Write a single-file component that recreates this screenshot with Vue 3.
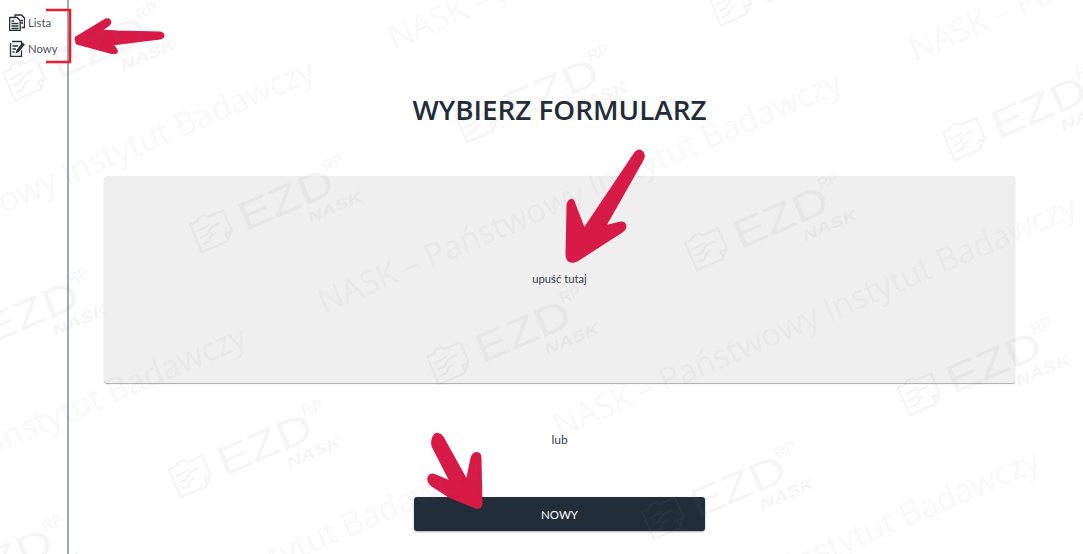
<template>
  <div class="page">
    <aside class="sidebar">
      <a class="side-link">
        <svg class="side-icon" viewBox="0 0 16 17" fill="none" stroke="#27313a" stroke-width="1.3">
          <path d="M6 3V1h6.500l3 3v9.500h-3" />
          <path d="M.7 3.500h7.500l3 3v9.800H.7z" fill="#fff" />
          <path d="M2.500 7h2.500M2.500 9.500h7M2.500 12h7M2.500 14.500h7" />
          <path d="M12 6.500h2M12 9h2" />
        </svg>
        <span>Lista</span>
      </a>
      <a class="side-link">
        <svg class="side-icon" viewBox="0 0 16 17" fill="none" stroke="#27313a" stroke-width="1.3">
          <path d="M3 1.500h9.500v3M12.500 10.500v5.800H1.500V3" />
          <path d="M3.500 6h5.500M3.500 9h3.500M3.500 12h2" />
          <path d="M6.500 13.500l1-3.500 6-7.500 2.400 2-6 7.500z" fill="#27313a" stroke="none" />
        </svg>
        <span>Nowy</span>
      </a>
    </aside>

    <main class="content">
      <h1 class="title">WYBIERZ FORMULARZ</h1>
      <div class="dropzone">upuść tutaj</div>
      <p class="or">lub</p>
      <button class="new-btn">NOWY</button>
    </main>

    <!-- red markup drawn on the screenshot -->
    <svg class="overlay" viewBox="0 0 1083 554">
      <path d="M46 10H70V62H46" fill="none" stroke="#ec1c2c" stroke-width="2.500" />
      <g fill="#d81a47" stroke="#d81a47" stroke-width="3" stroke-linejoin="round">
        <path d="M76 38 104 21C109 18 112 22 108 25L99 31 118 32 160 33C164 34 164 37 160 38L128 42 112 44 116 50C118 53 114 53 110 52L77 43Z" />
        <path d="M640 151C644 153 644 157 642 160L604 227 621 223C626 223 626 228 622 231L577 260C571 263 567 261 567 254L568 205C569 199 573 199 574 204L584 230 635 154C637 151 638 151 640 151Z" />
        <path d="M434 437C436 433 440 434 442 437L467 482 472 458C474 452 480 452 480 458L481 503C481 507 479 508 476 507L449 496 432 485C427 481 428 475 433 475L452 483 433 446C432 442 433 439 434 437Z" />
      </g>
    </svg>

    <!-- watermark lies over everything, it shows through the arrows too -->
    <svg class="overlay watermark" viewBox="0 0 1083 554">
      <text
        v-for="t in lines"
        :key="t[0] + '-' + t[1]"
        :transform="`translate(${t[0]} ${t[1]}) rotate(-23.2)`"
        class="wm-line"
        textLength="566"
      >NASK – Państwowy Instytut Badawczy</text>
      <g
        v-for="l in logos"
        :key="l[0] + '/' + l[1]"
        :transform="`translate(${l[0]} ${l[1]}) rotate(-23.2)`"
      >
        <path
          class="wm-stroke"
          d="M-19-14h8l2-3h7l2 3h17v21l-8 9h-28zM10 16v-8h8M-15-5l14-1M-15 2h8l6-5 10-1M-15 9h7l5-5h5"
        />
        <text class="wm-ezd" x="29" y="14" textLength="100" lengthAdjust="spacingAndGlyphs">EZD</text>
        <text class="wm-rp" x="126" y="-9" textLength="22" lengthAdjust="spacingAndGlyphs">RP</text>
        <text class="wm-nask" x="92" y="32" textLength="58" lengthAdjust="spacingAndGlyphs">NASK</text>
      </g>
    </svg>
  </div>
</template>

<script setup>
const lines = [
  [-203, 302],
  [324, 314],
  [394, 50],
  [915, 62],
  [559, 438],
  [-271, 568],
  [-36, 702],
  [522, 692]
]

const logos = [
  [26, 78],
  [286, -37],
  [-42, 343],
  [213, 230],
  [478, 120],
  [732, 3],
  [-68, 590],
  [192, 475],
  [450, 362],
  [708, 248],
  [966, 138],
  [405, 632],
  [665, 517],
  [921, 393]
]
</script>

<style>
html,
body {
  margin: 0;
  background: #fff;
}
</style>

<style scoped>
.page {
  position: relative;
  display: flex;
  width: 1083px;
  height: 554px;
  overflow: hidden;
  background: #fff;
  font-family: Lato, "Liberation Sans", sans-serif;
  color: #36414c;
}

.sidebar {
  box-sizing: border-box;
  width: 69px;
  flex: none;
  padding-top: 9px;
  border-right: 2px solid #a2a8ad;
}

.side-link {
  display: flex;
  align-items: center;
  gap: 3px;
  height: 26px;
  padding-left: 9px;
  font-size: 11.300px;
  color: #48535e;
}

.side-icon {
  width: 16px;
  height: 17px;
}

.content {
  box-sizing: border-box;
  width: 981px;
  padding: 0 35px;
  display: flex;
  flex-direction: column;
  align-items: center;
}

.title {
  margin: 93px 0 0;
  height: 83px;
  font-family: "Open Sans", sans-serif;
  font-size: 27.800px;
  line-height: 32px;
  font-weight: 600;
  color: #212c38;
}

.dropzone {
  align-self: stretch;
  box-sizing: border-box;
  height: 207px;
  padding-bottom: 2px;
  display: flex;
  align-items: center;
  justify-content: center;
  background: #efefef;
  border-radius: 3px;
  box-shadow: 0 1px 1px #aaa;
  font-size: 11.200px;
}

.or {
  margin: 49px 0 0;
  height: 65px;
  font-size: 12px;
  line-height: 15px;
}

.new-btn {
  width: 291px;
  height: 34px;
  border: 0;
  border-radius: 3px;
  background: #222d3a;
  box-shadow: 0 1px 2px rgba(0, 0, 0, 0.35);
  color: #fff;
  font-family: inherit;
  font-size: 11.500px;
  font-weight: 400;
}

.overlay {
  position: absolute;
  inset: 0;
  width: 1083px;
  height: 554px;
  pointer-events: none;
}

.watermark {
  filter: blur(0.5px);
}

.wm-line {
  font-family: "Open Sans", sans-serif;
  font-size: 33px;
  fill: rgba(128, 128, 128, 0.06);
}

.wm-stroke {
  fill: none;
  stroke: rgba(128, 128, 128, 0.09);
  stroke-width: 2;
}

.wm-ezd,
.wm-rp,
.wm-nask {
  font-family: "Liberation Sans", sans-serif;
  fill: rgba(128, 128, 128, 0.08);
}

.wm-ezd {
  font-size: 40px;
  font-weight: 400;
}

.wm-rp {
  font-size: 16px;
  font-weight: 400;
}

.wm-nask {
  font-size: 15px;
  font-weight: 700;
  font-style: italic;
}
</style>
